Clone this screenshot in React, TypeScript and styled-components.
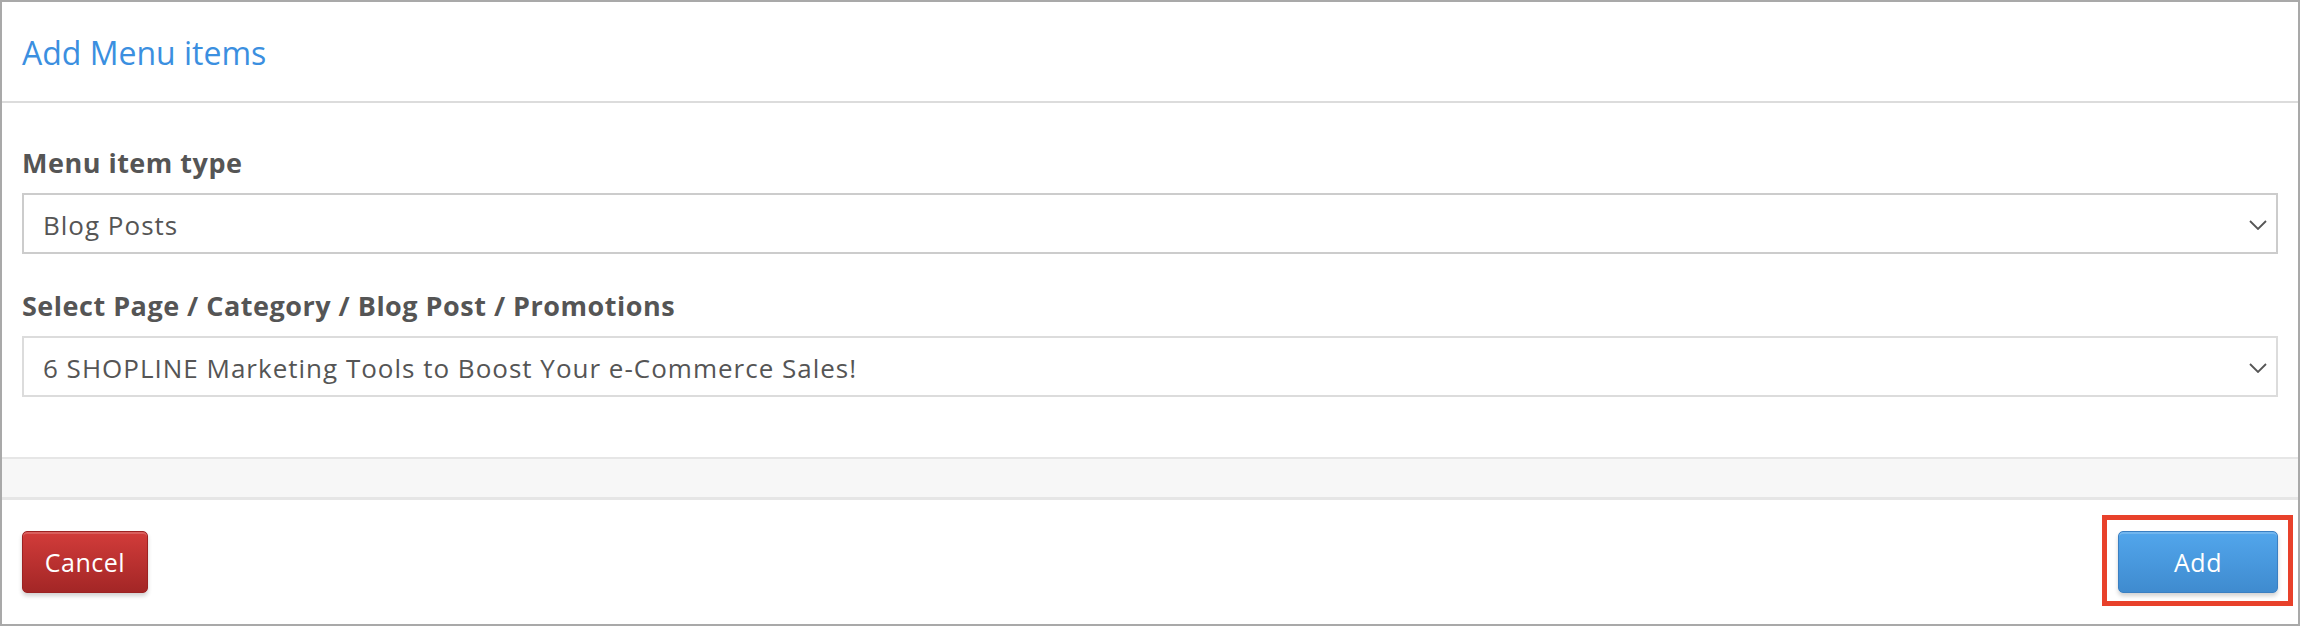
import React from "react";
import styled, { createGlobalStyle, css } from "styled-components";

const GlobalStyle = createGlobalStyle`
  * {
    box-sizing: border-box;
  }
  body {
    margin: 0;
    background: #ffffff;
    font-family: "Open Sans", "Liberation Sans", sans-serif;
  }
`;

const Panel = styled.div`
  width: 2300px;
  height: 626px;
  border: 2px solid #a9a9a9;
  display: flex;
  flex-direction: column;
  background: #ffffff;
`;

const Header = styled.div`
  height: 101px;
  flex-shrink: 0;
  display: flex;
  align-items: center;
  padding: 2px 20px 0;
  border-bottom: 2px solid #dcdcdc;
`;

const Title = styled.h2`
  margin: 0;
  font-size: 32px;
  font-weight: 400;
  color: #3b8fe0;
  line-height: 40px;
`;

const Body = styled.div`
  flex: 1;
  padding: 42px 20px 0;
`;

const Field = styled.div<{ $last?: boolean }>`
  margin-bottom: ${(p) => (p.$last ? "0" : "34px")};
`;

const Label = styled.label`
  display: block;
  font-size: 27px;
  font-weight: 700;
  line-height: 36px;
  letter-spacing: 0.5px;
  color: #555555;
  margin-bottom: 12px;
`;

const SelectBox = styled.div<{ $light?: boolean }>`
  height: 61px;
  display: flex;
  align-items: center;
  justify-content: space-between;
  padding: 3px 9px 0 19px;
  border: 2px solid ${(p) => (p.$light ? "#dcdcdc" : "#cccccc")};
  background: #ffffff;
  font-size: 26px;
  letter-spacing: 1px;
  color: #555555;
`;

const Chevron = () => (
  <svg width="18" height="10" viewBox="0 0 18 10" fill="none">
    <path d="M1 1l8 8 8-8" stroke="#555" strokeWidth="1.8" />
  </svg>
);

const Band = styled.div`
  height: 43px;
  flex-shrink: 0;
  background: #f7f7f7;
  border-top: 2px solid #e6e6e6;
  border-bottom: 3px solid #e6e6e6;
`;

const Footer = styled.div`
  height: 124px;
  flex-shrink: 0;
  display: flex;
  align-items: center;
  justify-content: space-between;
  padding: 0 20px;
`;

const Button = styled.button<{ $variant: "danger" | "primary" }>`
  height: 62px;
  border-radius: 5px;
  font-family: "Open Sans", "Liberation Sans", sans-serif;
  font-size: 25px;
  letter-spacing: 0.5px;
  color: #ffffff;
  cursor: pointer;
  box-shadow: 0 3px 4px rgba(0, 0, 0, 0.18), inset 0 2px 0 rgba(255, 255, 255, 0.18);
  ${(p) =>
    p.$variant === "danger"
      ? css`
          width: 126px;
          border: 1px solid #9c2222;
          background: linear-gradient(#d23c3a, #a32626);
        `
      : css`
          width: 160px;
          border: 1px solid #3a7fc2;
          background: linear-gradient(#52a6ec, #3f8bcf);
        `}
`;

const Highlight = styled.div`
  position: relative;
`;

const Outline = styled.span`
  position: absolute;
  top: -16px;
  left: -16px;
  right: -15px;
  bottom: -13px;
  border: 5px solid #e8412b;
  pointer-events: none;
`;

function App() {
  return (
    <>
      <GlobalStyle />
      <Panel>
        <Header>
          <Title>Add Menu items</Title>
        </Header>
        <Body>
          <Field>
            <Label>Menu item type</Label>
            <SelectBox>
              <span>Blog Posts</span>
              <Chevron />
            </SelectBox>
          </Field>
          <Field $last>
            <Label>Select Page / Category / Blog Post / Promotions</Label>
            <SelectBox $light>
              <span>6 SHOPLINE Marketing Tools to Boost Your e-Commerce Sales!</span>
              <Chevron />
            </SelectBox>
          </Field>
        </Body>
        <Band />
        <Footer>
          <Button $variant="danger">Cancel</Button>
          <Highlight>
            <Button $variant="primary">Add</Button>
            <Outline />
          </Highlight>
        </Footer>
      </Panel>
    </>
  );
}

export default App;
